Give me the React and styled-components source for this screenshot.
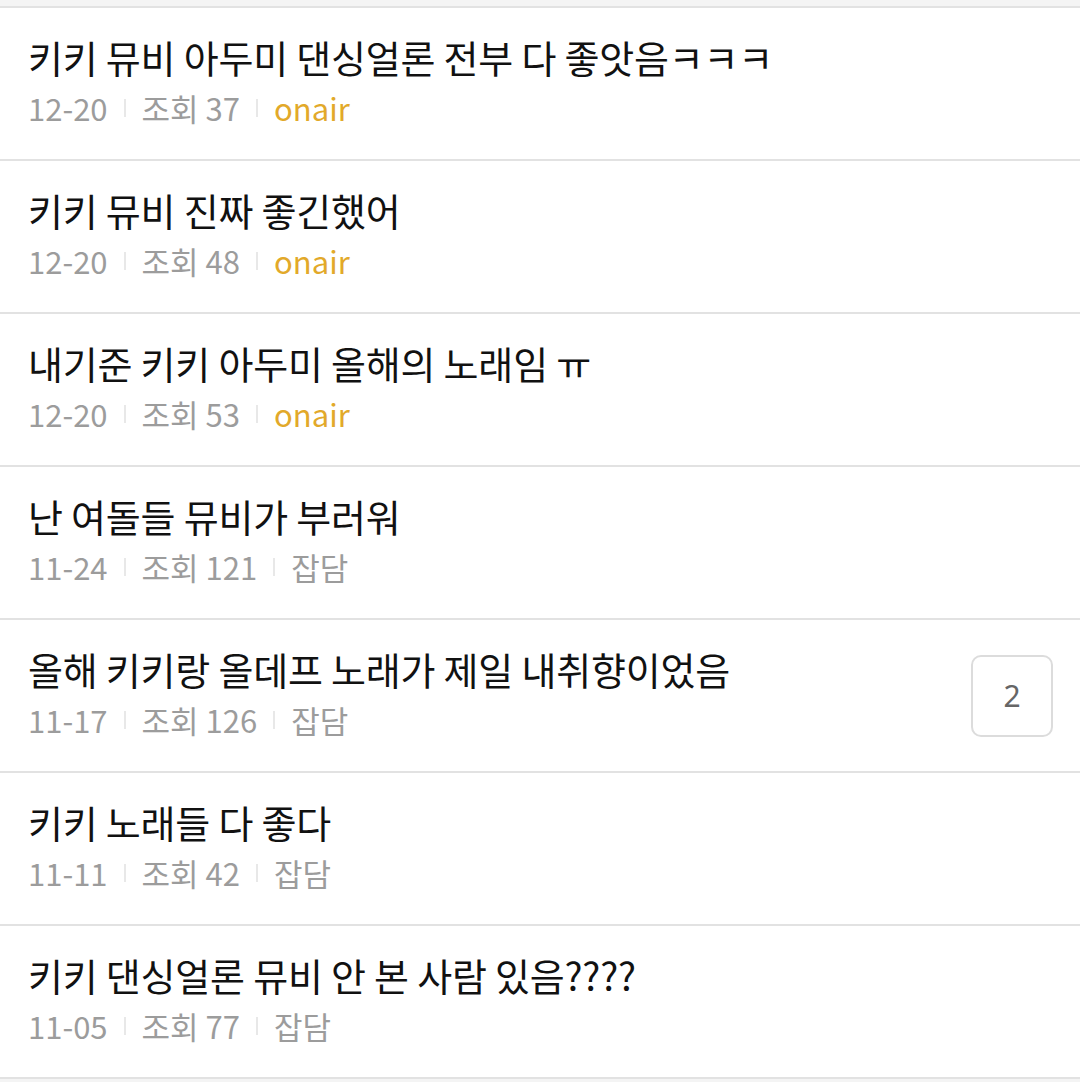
import React from 'react'
import styled, { createGlobalStyle } from 'styled-components'

const GlobalStyle = createGlobalStyle`
    html, body {
        margin: 0;
        padding: 0;
        background: #f4f4f4;
    }
    body {
        font-family: "Noto Sans CJK KR", "Noto Sans", sans-serif;
    }
`

const posts = [
    { title: '키키 뮤비 아두미 댄싱얼론 전부 다 좋앗음ㅋㅋㅋ', date: '12-20', views: 37, tag: 'onair' },
    { title: '키키 뮤비 진짜 좋긴했어', date: '12-20', views: 48, tag: 'onair' },
    { title: '내기준 키키 아두미 올해의 노래임 ㅠ', date: '12-20', views: 53, tag: 'onair' },
    { title: '난 여돌들 뮤비가 부러워', date: '11-24', views: 121, tag: '잡담' },
    { title: '올해 키키랑 올데프 노래가 제일 내취향이었음', date: '11-17', views: 126, tag: '잡담', comments: 2 },
    { title: '키키 노래들 다 좋다', date: '11-11', views: 42, tag: '잡담' },
    { title: '키키 댄싱얼론 뮤비 안 본 사람 있음????', date: '11-05', views: 77, tag: '잡담' },
]

const Post = ({ title, date, views, tag, comments }) => (
    <Row>
        <Body>
            <Title>{title}</Title>
            <Meta>
                <span>{date}</span>
                <Divider />
                <span>조회 {views}</span>
                <Divider />
                <Tag $onair={tag === 'onair'}>{tag}</Tag>
            </Meta>
        </Body>
        {comments && <CommentBox>{comments}</CommentBox>}
    </Row>
)

const App = () => (
    <>
        <GlobalStyle />
        <List>
            {posts.map((p, i) => <Post key={i} {...p} />)}
        </List>
    </>
)

const List = styled.ul`
    list-style: none;
    margin: 6px 0 0;
    padding: 0;
    background: #fff;
    border-top: 2px solid #e2e2e2;
`

const Row = styled.li`
    display: flex;
    align-items: center;
    height: 151px;
    padding: 0 27px 0 28px;
    border-bottom: 2px solid #e2e2e2;
`

const Body = styled.div`
    flex: 1;
    display: flex;
    flex-direction: column;
    gap: 6px;
    padding-bottom: 8px;
`

const Title = styled.div`
    font-size: 38px;
    line-height: 50px;
    color: #111;
    letter-spacing: -0.2px;
`

const Meta = styled.div`
    display: flex;
    align-items: center;
    gap: 16px;
    font-size: 31px;
    line-height: 40px;
    color: #9c9c9c;
`

const Divider = styled.i`
    width: 2px;
    height: 18px;
    background: #e8e8e8;
`

const Tag = styled.span`
    color: ${p => p.$onair ? '#e2a92a' : '#9c9c9c'};
`

const CommentBox = styled.div`
    width: 78px;
    height: 78px;
    display: flex;
    align-items: center;
    justify-content: center;
    border: 2px solid #dcdcdc;
    border-radius: 10px;
    font-size: 30px;
    color: #666;
    font-family: "Noto Sans", sans-serif;
`

export default App
